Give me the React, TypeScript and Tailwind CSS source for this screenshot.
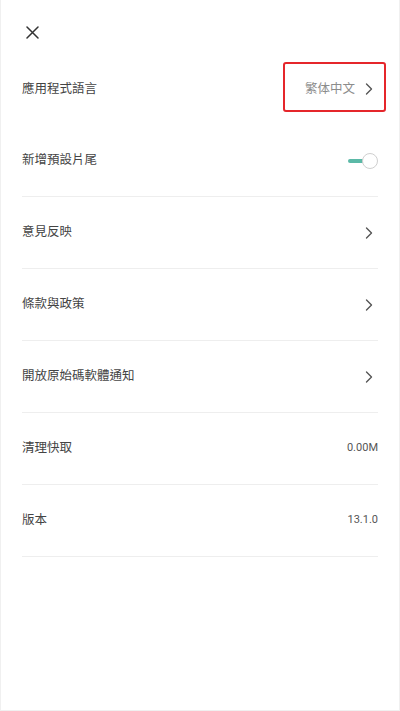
type Row = {
  label: string
  kind: "chevron" | "toggle" | "value"
  value?: string
}

const rows: Row[] = [
  { label: "新增預設片尾", kind: "toggle" },
  { label: "意見反映", kind: "chevron" },
  { label: "條款與政策", kind: "chevron" },
  { label: "開放原始碼軟體通知", kind: "chevron" },
  { label: "清理快取", kind: "value", value: "0.00M" },
  { label: "版本", kind: "value", value: "13.1.0" },
]

const cjk = "font-['Roboto','Noto_Sans_CJK_TC',sans-serif]"

function Chevron() {
  return (
    <svg width="8" height="12" viewBox="0 0 8 12" fill="none" stroke="#555" strokeWidth="1.4" strokeLinecap="round" strokeLinejoin="round">
      <path d="M1.5 1l5 5-5 5" />
    </svg>
  )
}

function Toggle() {
  return (
    <div className="flex items-center">
      <div className="h-[4px] w-[16px] rounded-full bg-[#5bb9a7]" />
      <div className="-ml-[2px] size-[16px] rounded-full border-[1.5px] border-[#cfcfcf] bg-white" />
    </div>
  )
}

export default function App() {
  return (
    <div className={`relative h-[711px] w-[400px] border-x border-b border-[#f0f0f0] bg-white ${cjk}`}>
      <div className="flex h-[53px] items-start pl-[25px] pt-[26px]">
        <svg width="13" height="13" viewBox="0 0 13 13" fill="none" stroke="#333" strokeWidth="1.5" strokeLinecap="round">
          <path d="M1 1l11 11M12 1L1 12" />
        </svg>
      </div>

      <div className="px-[21px]">
        <div className="relative flex h-[72px] items-center justify-between">
          <span className="text-[12.5px] text-[#444]">應用程式語言</span>
          <div className="flex items-center gap-[10px] pr-[5px]">
            <span className="text-[12.5px] text-[#8c8c8c]">繁体中文</span>
            <Chevron />
          </div>
          <div className="pointer-events-none absolute -right-[8px] top-[9px] h-[50px] w-[103px] rounded-[3px] border-2 border-[#e5262b]" />
        </div>

        {rows.map((row) => (
          <div key={row.label} className="flex h-[72px] flex-col border-b border-[#eeeeee]">
            <div className="flex flex-1 items-center justify-between">
              <span className="text-[12.5px] text-[#444]">{row.label}</span>
              {row.kind === "chevron" && (
                <div className="flex pr-[5px]">
                  <Chevron />
                </div>
              )}
              {row.kind === "toggle" && <Toggle />}
              {row.kind === "value" && (
                <span className="font-['Roboto',sans-serif] text-[11px] text-[#555]">{row.value}</span>
              )}
            </div>
          </div>
        ))}
      </div>
    </div>
  )
}
